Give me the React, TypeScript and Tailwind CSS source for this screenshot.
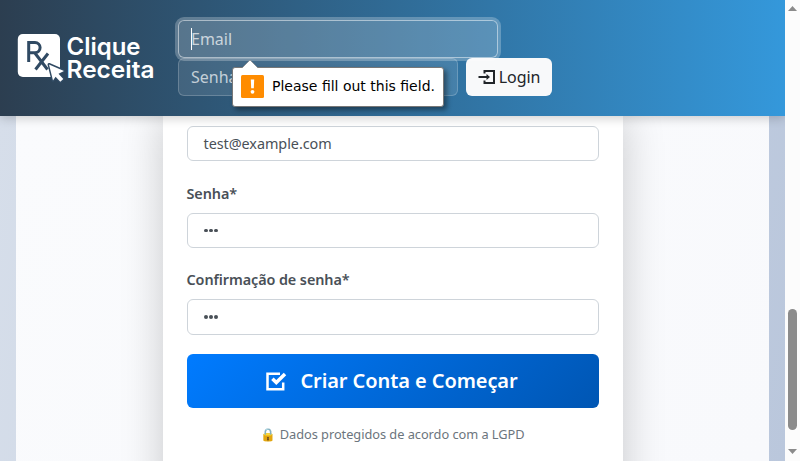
import React from "react";

function Logo() {
  return (
    <svg width="140" height="54" viewBox="0 0 140 54" fill="white" role="img" aria-label="Clique Receita">
      <rect x="0.8" y="3" width="42.2" height="43" rx="5" />
      <g fill="none" stroke="#304a63" strokeWidth="3">
        <path d="M11.7 31V11.5H18a5 5 0 0 1 0 10.2H12M17.5 21.5L30.5 38.5M31 22.5L18.5 38.5" />
      </g>
      <path d="M32 33.5L47 40L41.5 42.8L46.3 48L43.3 50.8L38.6 45.8L36 49.5Z" stroke="#304a63" strokeWidth="3" strokeLinejoin="round" />
      <path d="M32 33.5L47 40L41.5 42.8L46.3 48L43.3 50.8L38.6 45.8L36 49.5Z" />
      <g fontFamily="Inter, sans-serif" fontWeight="600" fontSize="24">
        <text x="49.5" y="23.5" textLength="74" lengthAdjust="spacingAndGlyphs">Clique</text>
        <text x="49.5" y="46.5" textLength="88" lengthAdjust="spacingAndGlyphs">Receita</text>
      </g>
    </svg>
  );
}

function LoginIcon() {
  return (
    <svg width="17" height="16" viewBox="0 0 17 16" fill="none" stroke="#212529" strokeWidth="2">
      <path d="M6.5 4.5V2H16V14H6.5V11.5M0.5 8H10" />
      <path d="M8.5 5L12 8L8.5 11Z" fill="#212529" stroke="none" />
    </svg>
  );
}

function CheckIcon() {
  return (
    <svg width="21" height="19" viewBox="0 0 21 19" fill="none" stroke="white">
      <path d="M14 1.7H1.5V17.2H17.2V10.5" strokeWidth="2.5" />
      <path d="M6.4 6.8L10.3 10.6L19 2" strokeWidth="3.5" />
    </svg>
  );
}

function ValidationBubble() {
  return (
    <div className="absolute left-[54px] top-[47px] z-20 flex h-10 w-[212px] items-start gap-2 rounded-[3px] border border-[#777] bg-white pl-2 pt-[7px] shadow-[3px_3px_5px_rgba(0,0,0,0.4)]">
      <svg className="absolute left-[9px] top-[-8px]" width="16" height="9" viewBox="0 0 16 9">
        <path d="M0 8L8 0L16 8V9H0Z" fill="white" />
        <path d="M0 8L8 0L16 8" fill="none" stroke="#777" strokeWidth="0.6" />
      </svg>
      <svg className="shrink-0" width="23" height="23" viewBox="0 0 23 23">
        <rect width="23" height="23" rx="1.5" fill="#ff8c00" />
        <path d="M9.8 4.5H13.2L12.8 13.2H10.2Z" fill="white" />
        <circle cx="11.5" cy="16.8" r="1.9" fill="white" />
      </svg>
      <span className="mt-px whitespace-nowrap font-['DejaVu_Sans',sans-serif] text-[14px] leading-5 text-black">Please fill out this field.</span>
    </div>
  );
}

function Header() {
  return (
    <header className="relative z-10 flex h-[116px] shrink-0 items-center bg-[linear-gradient(90deg,#2c3e50,#3498db)] pl-[17px] shadow-[0_2px_10px_rgba(0,0,0,0.2)]">
      <Logo />
      <form className="relative ml-[21px] w-[374px]">
        <div className="relative z-10 flex h-[38px] w-80 items-center rounded-md border border-white/50 bg-white/20 px-3 text-base text-white/70 shadow-[0_0_0_3px_rgba(255,255,255,0.25)]">
          <span className="h-[22px] w-px bg-white" />
          <span className="-ml-px">Email</span>
        </div>
        <div className="flex gap-2">
          <div className="flex h-[38px] w-[280px] items-center rounded-md border border-white/20 bg-white/10 px-3 text-base text-white/70">Senha</div>
          <button type="button" className="flex h-[38px] w-[86px] items-center justify-center gap-1 rounded-md bg-[#f8f9fa] text-base tracking-[-0.1px] text-[#212529]">
            <LoginIcon />
            Login
          </button>
        </div>
        <ValidationBubble />
      </form>
    </header>
  );
}

function Label({ children }: { children: React.ReactNode }) {
  return <div className="h-[21px] text-[14.4px] font-semibold leading-[21px] tracking-[-0.08px] text-[#495057]">{children}</div>;
}

function Dots() {
  return (
    <span className="ml-[0.5px] flex gap-[1.5px]">
      {[0, 1, 2].map((i) => (
        <span key={i} className="size-[3.5px] rounded-full bg-[#495057]" />
      ))}
    </span>
  );
}

function Scrollbar() {
  return (
    <div className="flex w-[15px] flex-col items-center bg-[#fcfcfc]">
      <svg className="mt-[6px]" width="9" height="5" viewBox="0 0 9 5"><path d="M4.5 0L9 5H0Z" fill="#8b8b8b" /></svg>
      <div className="mt-[298px] h-[121px] w-[9px] rounded-full bg-[#8b8b8b]" />
      <svg className="mt-[19px]" width="9" height="5" viewBox="0 0 9 5"><path d="M0 0H9L4.5 5Z" fill="#8b8b8b" /></svg>
    </div>
  );
}

export default function App() {
  return (
    <div className="flex h-[461px] w-[800px] overflow-hidden font-['Noto_Sans',sans-serif]">
      <div className="flex w-[785px] flex-col overflow-hidden">
        <Header />
        <main className="flex h-[345px] bg-[linear-gradient(100deg,#d6deea,#bac7dc)] px-4">
          <div className="flex w-[753px] justify-center overflow-hidden bg-[linear-gradient(135deg,#fafbfd,#f8f9fc)]">
            <section className="flex h-[400px] w-[460px] flex-col bg-white px-6 pt-[10px] shadow-[0_0_40px_rgba(0,0,0,0.2)]">
              <div className="flex h-[35px] items-center rounded-md border border-[#ced4da] px-4 text-[14.4px] tracking-[-0.05px] text-[#495057]">test@example.com</div>
              <div className="mt-[22px]">
                <Label>Senha*</Label>
              </div>
              <div className="mt-[9px] flex h-[35px] items-center rounded-md border border-[#ced4da] px-4"><Dots /></div>
              <div className="mt-[21px]">
                <Label>Confirmação de senha*</Label>
              </div>
              <div className="mt-[9px] flex h-[36px] items-center rounded-md border border-[#ced4da] px-4"><Dots /></div>
              <button type="button" className="mt-[19px] flex h-[54px] shrink-0 items-center justify-center gap-[13px] rounded-md bg-[linear-gradient(135deg,#007bff,#0056b3)] pr-px text-xl font-semibold tracking-[-0.08px] text-white">
                <CheckIcon />
                Criar Conta e Começar
              </button>
              <div className="mt-4 text-center text-[12.8px] leading-5 tracking-[-0.04px] text-[#6c757d]">🔒 Dados protegidos de acordo com a LGPD</div>
            </section>
          </div>
        </main>
      </div>
      <Scrollbar />
    </div>
  );
}
